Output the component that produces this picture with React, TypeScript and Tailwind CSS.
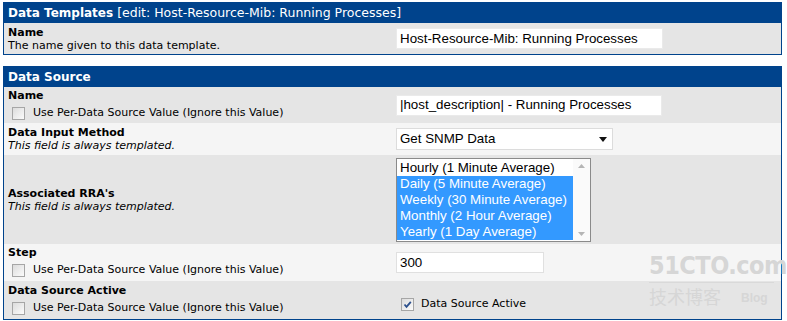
import React from 'react';

const verdana = { fontFamily: '"DejaVu Sans", Verdana, sans-serif' };
const arial = { fontFamily: '"Liberation Sans", Arial, sans-serif' };

function Check({ checked = false }: { checked?: boolean }) {
  return (
    <span className="inline-flex w-[13px] h-[13px] shrink-0 items-center justify-center border border-[#a6a6a6] bg-gradient-to-br from-[#dcdcdc] to-[#fbfbfb]">
      {checked && (
        <svg viewBox="0 0 11 11" className="w-[11px] h-[11px]">
          <path d="M2.5 5.5 L4.5 7.8 L8.8 2.8" fill="none" stroke="#2b4f8c" strokeWidth="1.8" />
        </svg>
      )}
    </span>
  );
}

function Ignore() {
  return (
    <div className="flex items-center gap-[8px] mt-[3px] pl-[4px]">
      <Check />
      <span className="text-[11px] text-black">Use Per-Data Source Value (Ignore this Value)</span>
    </div>
  );
}

function Label({ title, desc, italic }: { title: string; desc?: string; italic?: boolean }) {
  return (
    <div className="leading-[13px]">
      <div className="text-[11px] font-bold text-black">{title}</div>
      {desc && <div className={`text-[11px] text-black ${italic ? 'italic' : ''}`}>{desc}</div>}
    </div>
  );
}

function Row({ bg, h, left, right }: { bg: string; h: string; left: React.ReactNode; right: React.ReactNode }) {
  return (
    <div className={`flex items-center ${bg} ${h}`}>
      <div className="w-[392px] pl-[4px]">{left}</div>
      <div className="flex-1">{right}</div>
    </div>
  );
}

const RRAS = [
  'Hourly (1 Minute Average)',
  'Daily (5 Minute Average)',
  'Weekly (30 Minute Average)',
  'Monthly (2 Hour Average)',
  'Yearly (1 Day Average)',
];

export default function App() {
  return (
    <div className="relative w-[787px] h-[321px] bg-white overflow-hidden pt-[2px] pl-[3px]" style={verdana}>
      <div className="w-[779px] border border-[#00438c]">
        <div className="bg-[#00438c] h-[20px] flex items-center pl-[4px] text-white text-[12.5px]">
          <span className="font-bold text-[12px]">Data Templates</span>
          <span className="ml-[4px]">[edit: Host-Resource-Mib: Running Processes]</span>
        </div>
        <Row
          bg="bg-[#e5e5e5]"
          h="h-[31px]"
          left={<Label title="Name" desc="The name given to this data template." />}
          right={
            <div className="w-[267px] h-[21px] bg-white border border-[#eaeaea] flex items-center pl-[3px] text-[13.33px] text-black" style={arial}>
              Host-Resource-Mib: Running Processes
            </div>
          }
        />
      </div>

      <div className="w-[779px] border border-[#00438c] mt-[11px]">
        <div className="bg-[#00438c] h-[20px] flex items-center pl-[4px] text-white text-[12px] font-bold">
          Data Source
        </div>
        <Row
          bg="bg-[#e5e5e5]"
          h="h-[36px]"
          left={
            <div>
              <Label title="Name" />
              <Ignore />
            </div>
          }
          right={
            <div className="w-[266px] h-[21px] bg-white border border-[#eaeaea] flex items-center pl-[3px] text-[13.33px] text-black" style={arial}>
              |host_description| - Running Processes
            </div>
          }
        />
        <Row
          bg="bg-[#f5f5f5]"
          h="h-[32px]"
          left={<Label title="Data Input Method" desc="This field is always templated." italic />}
          right={
            <div className="w-[217px] h-[22px] bg-white border border-[#dcdcdc] flex items-center justify-between pl-[3px] pr-[5px] text-[13.33px] text-black" style={arial}>
              <span>Get SNMP Data</span>
              <svg viewBox="0 0 8 5" className="w-[8px] h-[5px]">
                <path d="M0 0 H8 L4 5 Z" fill="#111" />
              </svg>
            </div>
          }
        />
        <Row
          bg="bg-[#e5e5e5]"
          h="h-[89px]"
          left={<Label title="Associated RRA's" desc="This field is always templated." italic />}
          right={
            <div className="w-[195px] h-[84px] bg-white border border-[#8a8a8a] flex" style={arial}>
              <div className="flex-1 pt-[1px]">
                {RRAS.map((r, i) => (
                  <div
                    key={r}
                    className={`h-[16px] leading-[16px] pl-[3px] text-[13.33px] whitespace-nowrap ${i === 0 ? 'text-black' : 'bg-[#3399ff] text-white'}`}
                  >
                    {r}
                  </div>
                ))}
              </div>
              <div className="w-[17px] bg-[#fafafa] flex flex-col justify-between items-center py-[5px]">
                <svg viewBox="0 0 7 4" className="w-[7px] h-[4px]">
                  <path d="M0 4 L3.5 0 L7 4 Z" fill="#b5b5b5" />
                </svg>
                <svg viewBox="0 0 7 4" className="w-[7px] h-[4px]">
                  <path d="M0 0 L3.5 4 L7 0 Z" fill="#b5b5b5" />
                </svg>
              </div>
            </div>
          }
        />
        <Row
          bg="bg-[#f5f5f5]"
          h="h-[37px]"
          left={
            <div>
              <Label title="Step" />
              <Ignore />
            </div>
          }
          right={
            <div className="w-[148px] h-[21px] bg-white border border-[#e0e0e0] flex items-center pl-[3px] text-[13.33px] text-black" style={arial}>
              300
            </div>
          }
        />
        <Row
          bg="bg-[#e5e5e5]"
          h="h-[38px]"
          left={
            <div>
              <Label title="Data Source Active" />
              <Ignore />
            </div>
          }
          right={
            <div className="flex items-center gap-[7px] pl-[5px] pt-[8px]">
              <Check checked />
              <span className="text-[11px] text-black">Data Source Active</span>
            </div>
          }
        />
      </div>

      <div className="absolute left-[649px] top-[252px] text-[#d6d6d6] pointer-events-none select-none">
        <div className="text-[25px] font-bold leading-[28px] tracking-[-0.5px]" style={{ fontFamily: '"DejaVu Sans Condensed", "DejaVu Sans", sans-serif' }}>
          51CTO.com
        </div>
        <div className="h-[1px] w-[125px] bg-[#d9d9d9] mt-[2px]" />
        <div className="flex items-end gap-[20px] mt-[2px]">
          <span className="text-[18px] leading-[22px]" style={{ fontFamily: '"Noto Sans CJK SC", sans-serif' }}>技术博客</span>
          <span className="text-[12px] font-bold leading-[18px]" style={arial}>Blog</span>
        </div>
      </div>
    </div>
  );
}
